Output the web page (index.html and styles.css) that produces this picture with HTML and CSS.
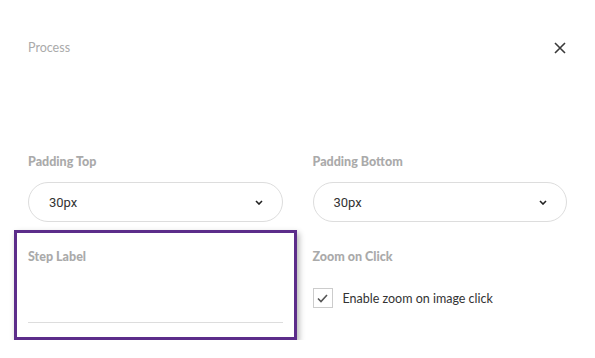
FILE: index.html
```html
<!DOCTYPE html>
<html lang="en">
<head>
    <meta charset="UTF-8">
    <title>Process settings</title>
    <link rel="stylesheet" href="styles.css">
</head>
<body>
    <div class="panel">
        <div class="panel-header">
            <span class="panel-title">Process</span>
            <button class="close-btn" aria-label="Close">
                <svg width="12" height="12" viewBox="0 0 12 12">
                    <path d="M1 1 L11 11 M11 1 L1 11" stroke="#3a3a3a" stroke-width="1.6" fill="none"/>
                </svg>
            </button>
        </div>

        <div class="settings-grid">
            <div class="field">
                <label class="field-label">Padding Top</label>
                <div class="select">
                    <span>30px</span>
                    <svg width="8" height="5" viewBox="0 0 8 5"><path d="M1 1 L4 4 L7 1" stroke="#222" stroke-width="1.6" fill="none"/></svg>
                </div>
            </div>
            <div class="field">
                <label class="field-label">Padding Bottom</label>
                <div class="select">
                    <span>30px</span>
                    <svg width="8" height="5" viewBox="0 0 8 5"><path d="M1 1 L4 4 L7 1" stroke="#222" stroke-width="1.6" fill="none"/></svg>
                </div>
            </div>

            <div class="cell selected">
                <label class="field-label">Step Label</label>
                <div class="text-input"></div>
            </div>
            <div class="cell">
                <label class="field-label">Zoom on Click</label>
                <div class="check-row">
                    <span class="checkbox">
                        <svg width="11" height="9" viewBox="0 0 11 9"><path d="M1 4.5 L4 7.5 L10 1" stroke="#555" stroke-width="1.6" fill="none"/></svg>
                    </span>
                    <span class="check-text">Enable zoom on image click</span>
                </div>
            </div>
        </div>
    </div>
</body>
</html>
```

FILE: styles.css
```css
html, body {
    margin: 0;
    padding: 0;
    background-color: #fff;
    font-family: Lato, "Open Sans", sans-serif;
}

.panel {
    padding: 40px 28px 0 28px;
}

.panel-header {
    display: flex;
    justify-content: space-between;
    align-items: center;
    height: 16px;
}

.panel-title {
    font-size: 12.5px;
    color: #aaa;
    line-height: 16px;
}

.close-btn {
    border: none;
    background: none;
    padding: 0;
    margin-right: 1px;
    display: flex;
    cursor: pointer;
}

.settings-grid {
    display: grid;
    grid-template-columns: 1fr 1fr;
    column-gap: 30px;
    margin-top: 98px;
}

.field-label {
    display: block;
    font-size: 12.5px;
    font-weight: 900;
    color: #aaa;
    line-height: 16px;
}

.select {
    margin-top: 12px;
    height: 38px;
    border: 1px solid #ddd;
    border-radius: 20px;
    padding: 0 20px;
    display: flex;
    justify-content: space-between;
    align-items: center;
    font-family: Roboto, sans-serif;
    font-size: 13px;
    color: #333;
}

.select svg {
    margin-right: -1px;
}

/* second row cells share the same frame so columns stay aligned */
.cell {
    margin: 8px -14px 0 -14px;
    padding: 16px 11px 14px 11px;
    border: 3px solid transparent;
}

.cell.selected {
    border-color: #5c2d8a;
    box-shadow: 2px 3px 6px rgba(0, 0, 0, 0.3);
}

.text-input {
    margin-top: 17px;
    height: 40px;
    border-bottom: 1px solid #ddd;
}

.check-row {
    display: flex;
    align-items: center;
    gap: 10px;
    margin-top: 23px;
}

.checkbox {
    width: 18px;
    height: 18px;
    border: 1px solid #ccc;
    display: flex;
    align-items: center;
    justify-content: center;
}

.check-text {
    font-size: 12.5px;
    color: #333;
}
```
